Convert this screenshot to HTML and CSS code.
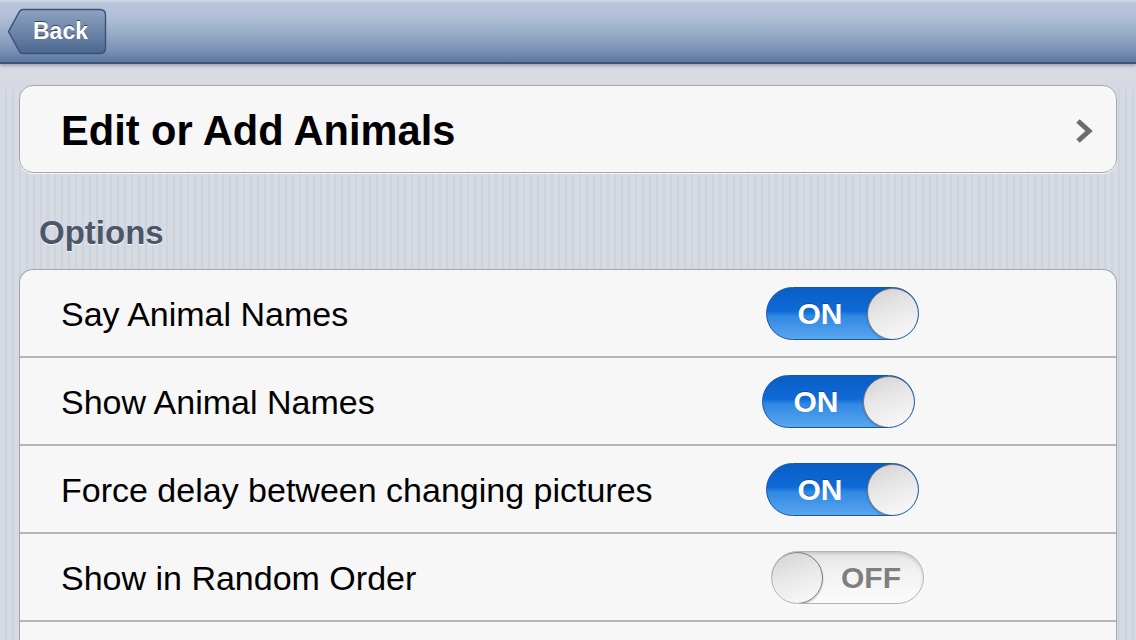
FILE: index.html
```html
<!DOCTYPE html>
<html lang="en">
<head>
<meta charset="utf-8">
<title>Settings</title>
<link rel="stylesheet" href="styles.css">
</head>
<body>
<header class="navbar">
  <a class="back-btn" href="#">
    <svg class="back-shape" width="100" height="47" viewBox="0 0 100 47" aria-hidden="true">
      <defs>
        <linearGradient id="bg" x1="0" y1="0" x2="0" y2="1">
          <stop offset="0" stop-color="#8ea3c1"/>
          <stop offset="0.5" stop-color="#6d85a8"/>
          <stop offset="1" stop-color="#4c6891"/>
        </linearGradient>
      </defs>
      <path d="M16 1.5 H93 Q98.5 1.5 98.5 7 V40 Q98.5 45.5 93 45.5 H16 Q14 45.5 12.5 43.5 L1.5 23.5 L12.5 3.5 Q14 1.5 16 1.5 Z" fill="url(#bg)" stroke="#3b5172" stroke-width="1.4"/>
    </svg>
    <span class="back-text">Back</span>
  </a>
</header>

<main class="content">
  <a class="card nav-card" href="#">
    <span class="nav-title">Edit or Add Animals</span>
    <svg class="chevron" width="20" height="26" viewBox="0 0 20 26" aria-hidden="true">
      <polyline points="3,3 14,13 3,23" fill="none" stroke="#6c6c6e" stroke-width="5"/>
    </svg>
  </a>

  <h2 class="section-title">Options</h2>

  <section class="card list">
    <div class="row">
      <span class="label">Say Animal Names</span>
      <span class="toggle on"><span class="toggle-text">ON</span><span class="knob"></span></span>
    </div>
    <div class="row">
      <span class="label">Show Animal Names</span>
      <span class="toggle on shift"><span class="toggle-text">ON</span><span class="knob"></span></span>
    </div>
    <div class="row">
      <span class="label">Force delay between changing pictures</span>
      <span class="toggle on"><span class="toggle-text">ON</span><span class="knob"></span></span>
    </div>
    <div class="row">
      <span class="label">Show in Random Order</span>
      <span class="toggle off"><span class="knob"></span><span class="toggle-text">OFF</span></span>
    </div>
    <div class="row"></div>
  </section>
</main>
</body>
</html>
```

FILE: styles.css
```css
* { box-sizing: border-box; }

html, body {
  margin: 0;
  padding: 0;
}

body {
  width: 1136px;
  height: 640px;
  overflow: hidden;
  font-family: "Liberation Sans", Arial, Helvetica, sans-serif;
  background-color: #d3d8e1;
  background-image: repeating-linear-gradient(90deg, #d5dae3 0px, #d5dae3 5px, #ced3dc 5px, #ced3dc 7px);
}

/* Navigation bar */
.navbar {
  height: 64px;
  border-top: 2px solid #cdd8e2;
  border-bottom: 2px solid #3d5577;
  background: linear-gradient(180deg, #bac7dd 0%, #b0bfd6 25%, #95a9c5 55%, #7a92b5 80%, #5d79a1 100%);
  box-shadow: 0 2px 3px rgba(60, 70, 90, 0.35);
  position: relative;
  z-index: 1;
  display: flex;
  align-items: flex-start;
  padding: 6px 0 0 7px;
}

.back-btn {
  position: relative;
  display: flex;
  align-items: center;
  width: 100px;
  height: 47px;
  padding-left: 26px;
  text-decoration: none;
}

.back-shape {
  position: absolute;
  left: 0;
  top: 0;
}

.back-text {
  position: relative;
  color: #ffffff;
  font-weight: bold;
  font-size: 23px;
  text-shadow: 0 -1px 0 rgba(0, 0, 0, 0.55);
}

/* Content */
.content {
  padding: 21px 19px 0 19px;
  background: linear-gradient(180deg, #d8dae2 0px, #d8dae2 18px, transparent 30px);
}

.card {
  display: block;
  width: 1098px;
  background: #f7f7f7;
  border: 1px solid #a3a6ab;
  border-radius: 14px;
  box-shadow: 0 1px 0 rgba(255, 255, 255, 0.8);
}

.nav-card {
  height: 88px;
  display: flex;
  align-items: center;
  justify-content: space-between;
  padding: 0 21px 0 41px;
  text-decoration: none;
  color: #000;
}

.nav-title {
  font-size: 41.6px;
  font-weight: bold;
  color: #000;
  margin-top: 4px;
}

.chevron {
  display: block;
  margin-top: 4px;
}

.section-title {
  margin: 40px 0 16px 20px;
  font-size: 33px;
  line-height: 40px;
  font-weight: bold;
  color: #4d5669;
  text-shadow: 0 1px 0 rgba(255, 255, 255, 0.9);
}

.list {
  border-bottom: none;
  border-bottom-left-radius: 0;
  border-bottom-right-radius: 0;
  overflow: hidden;
}

.row {
  height: 88px;
  display: flex;
  align-items: center;
  justify-content: space-between;
  padding: 0 197px 0 41px;
  border-bottom: 2px solid #b3b4b8;
}

.label {
  font-size: 34px;
  color: #000;
  margin-top: 3px;
}

/* Toggle switch */
.toggle {
  width: 153px;
  height: 53px;
  border-radius: 27px;
  display: flex;
  align-items: center;
  overflow: hidden;
  font-size: 30px;
  font-weight: bold;
  margin-top: 1px;
}

.toggle.shift {
  margin-right: 4px;
}

.toggle.on {
  background: linear-gradient(180deg, #0a5ec6 0%, #0f6ad6 45%, #3088e3 55%, #5aa6ef 100%);
  border: 1px solid #1558a8;
  color: #ffffff;
}

.toggle.on .toggle-text {
  flex: 1;
  text-align: center;
  padding-left: 6px;
  text-shadow: 0 -1px 0 rgba(0, 40, 100, 0.4);
}

.toggle.off {
  margin-right: -5px;
  background: linear-gradient(180deg, #e3e3e3 0%, #f2f2f2 40%, #fbfbfb 100%);
  border: 1px solid #b4b4b4;
  box-shadow: inset 0 2px 3px rgba(0, 0, 0, 0.12);
  color: #7f7f7f;
}

.toggle.off .toggle-text {
  flex: 1;
  text-align: center;
  padding-right: 4px;
  text-shadow: 0 1px 0 #ffffff;
}

.knob {
  flex: none;
  width: 52px;
  height: 52px;
  border-radius: 50%;
  background: linear-gradient(160deg, #d2d2d2 0%, #e6e6e6 40%, #fbfbfb 100%);
  border: 1.5px solid #7b7b7b;
  box-shadow: 0 1px 2px rgba(0, 0, 0, 0.25);
}

.toggle.on .knob {
  margin-right: -1px;
}

.toggle.off .knob {
  margin-left: -1px;
}
```
